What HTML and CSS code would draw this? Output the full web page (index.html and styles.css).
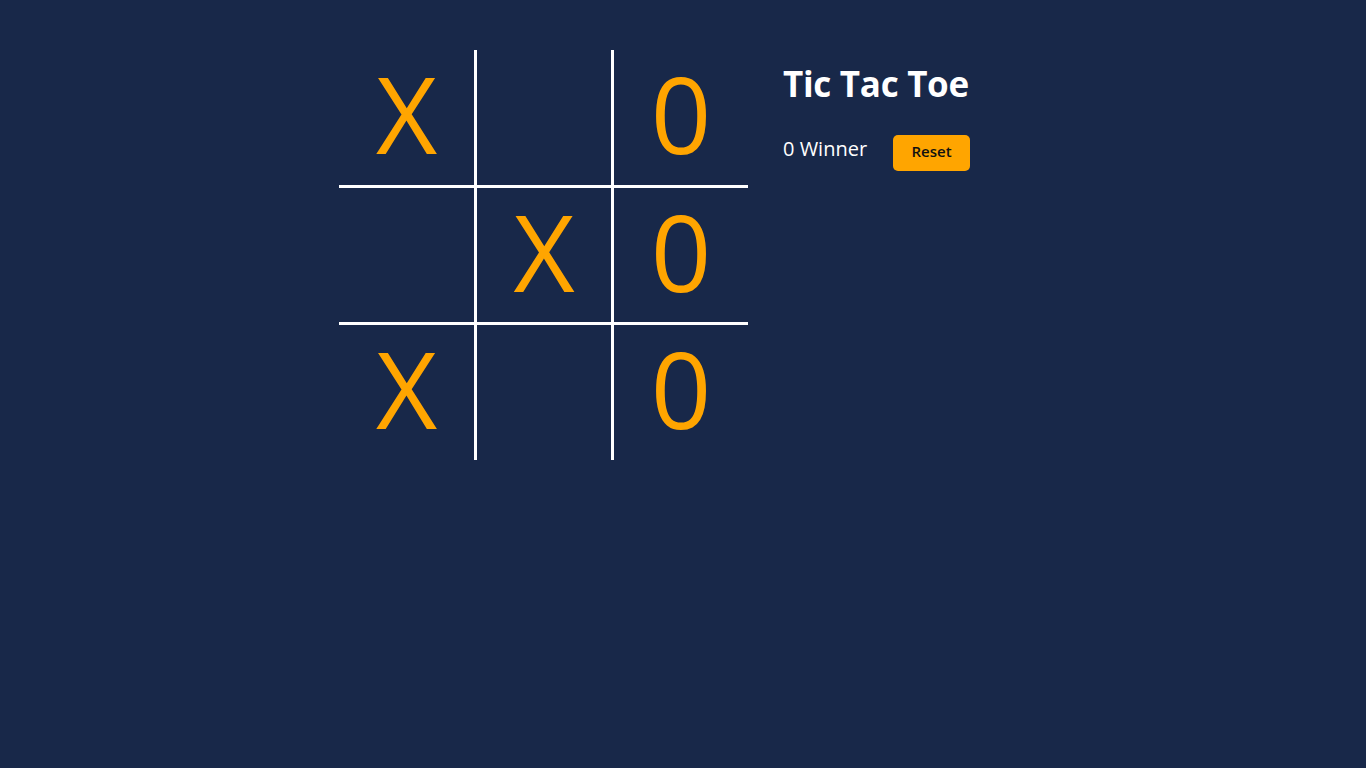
FILE: index.html
```html
<!DOCTYPE html>
<html lang="en">
<head>
<meta charset="utf-8">
<title>Tic Tac Toe</title>
<link rel="stylesheet" href="styles.css">
</head>
<body>
<main class="app">
  <div class="board">
    <div class="cell">X</div>
    <div class="cell"></div>
    <div class="cell">0</div>
    <div class="cell"></div>
    <div class="cell">X</div>
    <div class="cell">0</div>
    <div class="cell">X</div>
    <div class="cell"></div>
    <div class="cell">0</div>
  </div>
  <section class="panel">
    <h1 class="title">Tic Tac Toe</h1>
    <div class="status-row">
      <span class="status">0 Winner</span>
      <button class="reset">Reset</button>
    </div>
  </section>
</main>
</body>
</html>
```

FILE: styles.css
```css
html, body {
  margin: 0;
  padding: 0;
}

body {
  background: #182849;
  min-height: 768px;
  font-family: "Open Sans", "Noto Sans", sans-serif;
  color: #ffffff;
}

.app {
  display: flex;
  align-items: flex-start;
  gap: 35px;
  padding: 50px 0 0 339px;
}

.board {
  display: grid;
  grid-template-columns: 135px 134px 134px;
  grid-template-rows: 135px 134px 135px;
  gap: 3px;
  background: #ffffff;
}

.cell {
  background: #182849;
  display: flex;
  align-items: center;
  justify-content: center;
  padding-bottom: 9px;
  color: #ffa500;
  font-family: "Open Sans", sans-serif;
  font-size: 106px;
  line-height: 1;
}

.panel {
  display: flex;
  flex-direction: column;
}

.title {
  margin: 10px 0 0 0;
  font-size: 35px;
  font-weight: 700;
  line-height: normal;
  letter-spacing: -0.3px;
}

.status-row {
  display: flex;
  align-items: flex-start;
  gap: 26px;
  margin-top: 28px;
}

.status {
  font-size: 20px;
  line-height: normal;
}

.reset {
  width: 77px;
  height: 36px;
  padding: 0 0 5px 0;
  border: none;
  border-radius: 5px;
  background: #ffa500;
  color: #111111;
  font-family: "Open Sans", sans-serif;
  font-size: 15px;
  font-weight: 600;
  line-height: normal;
  display: flex;
  align-items: center;
  justify-content: center;
}
```
